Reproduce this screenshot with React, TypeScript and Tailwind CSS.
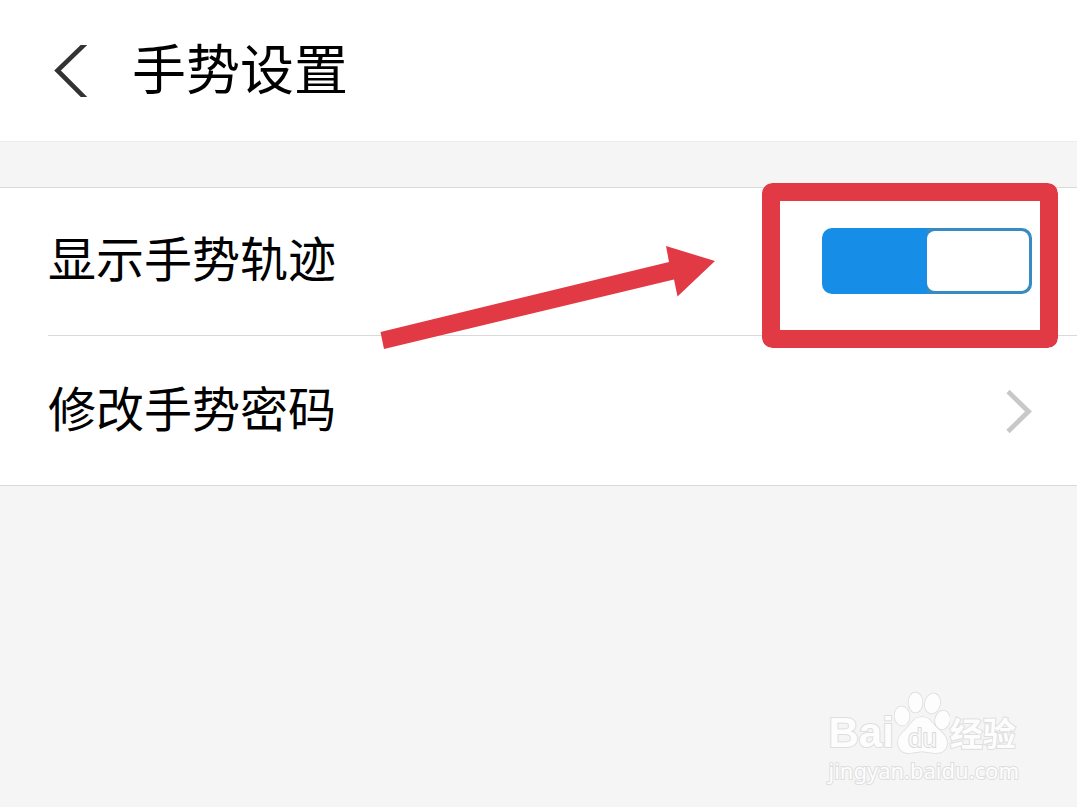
import { useState } from "react";

const fontStack =
  "font-['Liberation_Sans','Noto_Sans_CJK_SC',sans-serif]";

function BackIcon() {
  return (
    <svg className="w-9 h-13" viewBox="0 0 36 52" fill="none" aria-hidden="true">
      <path d="M34 -2L5.500 25.500L34 54" stroke="#333333" strokeWidth="4.600" />
    </svg>
  );
}

function ForwardIcon() {
  return (
    <svg className="w-7 h-11" viewBox="0 0 28 44" fill="none" aria-hidden="true">
      <path d="M4 2.500L24.500 22.500L4 42.500" stroke="#c8c8c8" strokeWidth="4.800" />
    </svg>
  );
}

function Arrow() {
  return (
    <svg
      className="absolute right-[360px] top-[58px] w-[340px] h-[106px] pointer-events-none"
      viewBox="0 0 340 106"
      aria-hidden="true"
    >
      <path
        d="M3.500 86L292 16L289 0L338 15L300.500 50.500L297 33.500L7 103Z"
        fill="#e23a45"
      />
    </svg>
  );
}

function PawLogo() {
  return (
    <svg
      className="w-14 h-16"
      viewBox="0 0 56 64"
      fill="#fdfdfd"
      stroke="#dcdcdc"
      strokeWidth="1.500"
      aria-hidden="true"
    >
      <ellipse cx="8" cy="25" rx="7.500" ry="9.500" transform="rotate(-6 8 25)" />
      <ellipse cx="21.500" cy="11.500" rx="7" ry="10" />
      <ellipse cx="38.500" cy="12.500" rx="7.500" ry="10" transform="rotate(14 38.500 12.500)" />
      <ellipse cx="48.500" cy="29" rx="7.300" ry="9.300" transform="rotate(10 48.500 29)" />
      <path d="M28 26C35 26 38 31 42 36C47 41 53 44 53 52C53 59 48 62 42 62C36 62 33 60.500 28 60.500C23 60.500 20 62 14 62C8 62 4 58 4 51C4 44 10 41 14 36C18 31 21 26 28 26Z" />
      <text
        x="28.500"
        y="56"
        textAnchor="middle"
        fontFamily="Liberation Sans, sans-serif"
        fontSize="26"
        fill="#f8f8f8"
        stroke="#d2d2d2"
      >
        du
      </text>
    </svg>
  );
}

function Watermark() {
  return (
    <footer className="mt-auto self-end flex flex-col items-start pr-[58px] pb-[25px] text-[#fdfdfd] [-webkit-text-stroke:2px_#dedede] [paint-order:stroke]">
      <div className="flex items-end h-16 mb-[3px]">
        <span className="text-[42px] leading-11 font-bold">Bai</span>
        <PawLogo />
        <span className="text-[33px] leading-10 font-bold">经验</span>
      </div>
      <span className="text-[22px] leading-6 font-['Noto_Sans',sans-serif]">
        jingyan.baidu.com
      </span>
    </footer>
  );
}

export default function App() {
  const [showTrack, setShowTrack] = useState(true);

  return (
    <div
      className={`flex flex-col min-h-screen bg-[#f5f5f5] text-black ${fontStack}`}
    >
      <header className="flex items-center gap-11 h-[142px] px-[52px] bg-white border-b border-[#ebebeb]">
        <button type="button" aria-label="返回">
          <BackIcon />
        </button>
        <h1 className="text-[54px] leading-none">手势设置</h1>
      </header>

      <main className="mt-[45px] bg-white border-y border-[#d9d9d9]">
        <div className="relative ml-12 flex items-center justify-between h-[148px] pr-[45px] pb-[2px] border-b border-[#d9d9d9]">
          <label htmlFor="show-track" className="text-5xl">
            显示手势轨迹
          </label>
          <input
            id="show-track"
            type="checkbox"
            role="switch"
            checked={showTrack}
            onChange={(e) => setShowTrack(e.target.checked)}
            className="appearance-none flex w-[210px] h-[66px] p-[3px] rounded-[10px] border-0 bg-gray-300 checked:bg-linear-to-r checked:from-[#168de7] checked:from-50% checked:to-[#368bc0] checked:to-50% checked:justify-end before:block before:w-[102px] before:h-full before:rounded-lg before:bg-white"
          />
          <div className="absolute right-[19px] -top-[5px] w-[296px] h-[165px] rounded-[10px] bg-[#e23a45] [mask:linear-gradient(#000_0_0)_border-box_exclude,linear-gradient(#000_0_0)_content-box] p-[18px] pointer-events-none" />
          <Arrow />
        </div>
        <button
          type="button"
          className="flex items-center justify-between w-full h-[149px] pl-12 pr-[45px]"
        >
          <span className="text-5xl">修改手势密码</span>
          <ForwardIcon />
        </button>
      </main>

      <Watermark />
    </div>
  );
}
